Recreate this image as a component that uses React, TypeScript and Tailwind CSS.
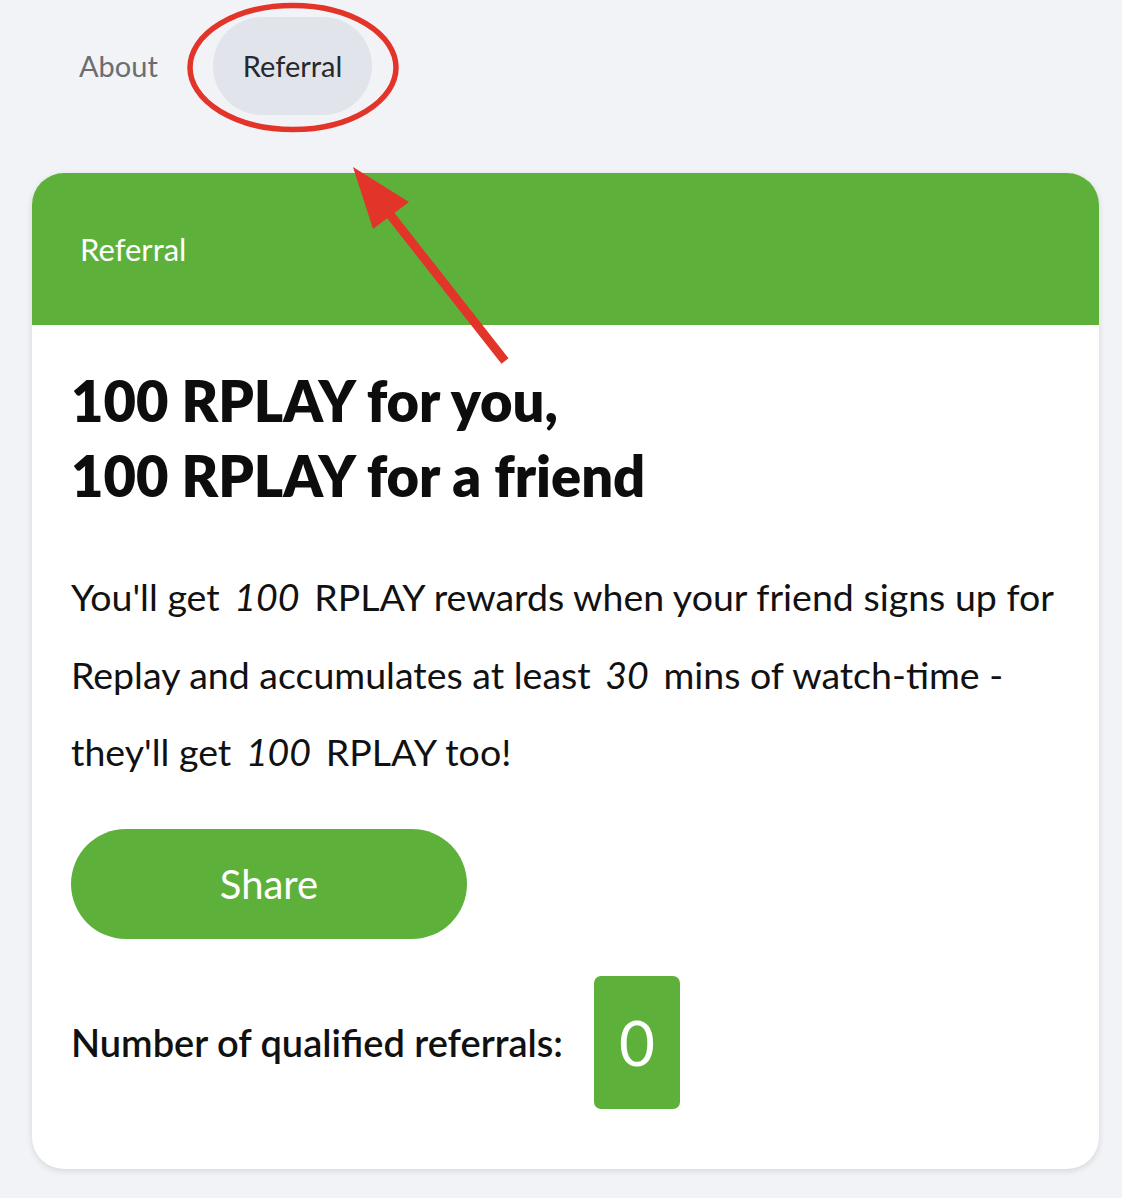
import React from 'react'

const green = 'bg-[#5db13b]'

function Annotation() {
  // red circle + arrow drawn on top of the screenshot
  return (
    <svg className="pointer-events-none absolute left-0 top-0" width="1122" height="1198" viewBox="0 0 1122 1198">
      <ellipse cx="293" cy="67.5" rx="103" ry="62" fill="none" stroke="#e3342a" strokeWidth="5.5" />
      <line x1="505" y1="361" x2="388" y2="212" stroke="#e3342a" strokeWidth="9" />
      <polygon points="353,167 409,202 373,229" fill="#e3342a" />
    </svg>
  )
}

export default function App() {
  return (
    <div className="relative h-[1198px] w-[1122px] overflow-hidden bg-[#f1f3f7] font-['Lato',sans-serif]">
      {/* Tabs */}
      <div className="flex h-[134px] items-start pl-[79px] pt-[17px]">
        <div className="flex h-[98px] items-center text-[29px] text-[#6b6d70]">About</div>
        <div className="ml-[55px] flex h-[98px] items-center rounded-full bg-[#e1e4ea] px-[30px] text-[29px] text-[#26292c]">
          Referral
        </div>
      </div>

      {/* Card */}
      <div className="ml-[32px] mt-[39px] w-[1067px] overflow-hidden rounded-[32px] bg-white shadow-[0_2px_6px_rgba(0,0,0,0.12)]">
        <div className={`flex h-[152px] items-center px-[48px] text-[31px] text-white ${green}`}>Referral</div>

        <div className="px-[39px] pb-[60px] pt-[38px]">
          <h1 className="text-[56px] font-extrabold leading-[75px] text-[#0d0d0d]">
            100 RPLAY for you,
            <br />
            100 RPLAY for a friend
          </h1>

          <p className="mt-[45px] whitespace-nowrap text-[37.5px] leading-[77.5px] text-[#111]">
            You'll get <i className="mx-[5px]">100</i> RPLAY rewards when your friend signs up for
            <br />
            Replay and accumulates at least <i className="mx-[5px]">30</i> mins of watch-time -
            <br />
            they'll get <i className="mx-[5px]">100</i> RPLAY too!
          </p>

          <button className={`mt-[38px] flex h-[110px] w-[396px] items-center justify-center rounded-full text-[40px] text-white ${green}`}>
            Share
          </button>

          <div className="mt-[37px] flex items-center">
            <span className="text-[38px] font-semibold text-[#111]">Number of qualified referrals:</span>
            <div className={`ml-[31px] flex h-[133px] w-[86px] items-center justify-center rounded-[7px] text-[62px] text-white ${green}`}>
              0
            </div>
          </div>
        </div>
      </div>

      <Annotation />
    </div>
  )
}
